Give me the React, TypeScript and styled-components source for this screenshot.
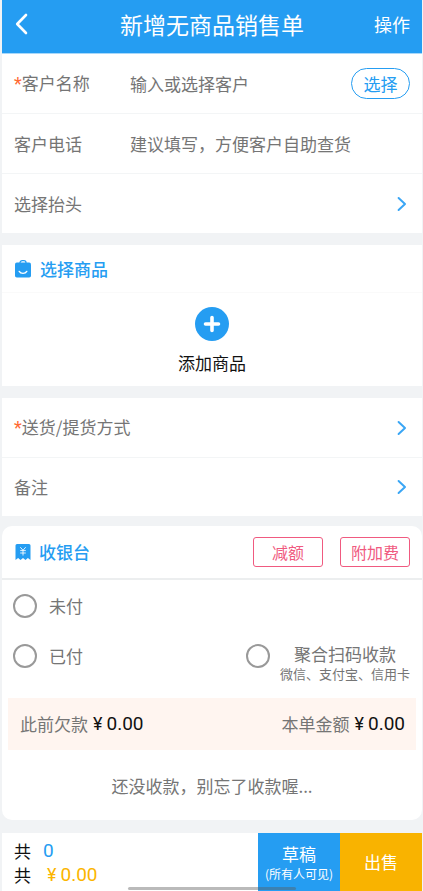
import React from "react";
import styled, { createGlobalStyle } from "styled-components";

const BLUE = "#259df2";

const GlobalStyle = createGlobalStyle`
  * { box-sizing: border-box; }
  body { margin: 0; background: #f1f3f5; }
  button, input { font: inherit; color: inherit; margin: 0; }
  button { border: 0; padding: 0; background: none; cursor: pointer; }
`;

const Page = styled.div`
  min-height: 100vh;
  display: flex;
  flex-direction: column;
  padding: 0 1px 0 2px;
  background: #f1f3f5;
  color: #757575;
  font-family: "Noto Sans CJK SC", "Noto Sans", sans-serif;
  font-size: 17px;
  line-height: 24px;
`;

const Header = styled.header`
  display: grid;
  grid-template-columns: 1fr auto 1fr;
  align-items: center;
  height: 54px;
  padding: 0 12px 5px;
  border-bottom: 1px solid #a8d8fa;
  background: ${BLUE};
  color: #fff;
`;

const Title = styled.h1`
  margin: 0;
  font-size: 23px;
  line-height: 32px;
  font-weight: 400;
`;

const HeaderButton = styled.button<{ $end?: boolean }>`
  display: flex;
  justify-self: ${(p) => (p.$end ? "end" : "start")};
  font-size: 18px;
`;

const Main = styled.main`
  flex: 1;
  display: flex;
  flex-direction: column;
  gap: 12px;
`;

const Panel = styled.section`
  background: #fff;
`;

const Row = styled.div`
  display: flex;
  align-items: center;
  height: 60px;
  padding: 0 12px;
  border-bottom: 1px solid #f3f5f6;
`;

const LinkRow = styled.button`
  display: flex;
  align-items: center;
  justify-content: space-between;
  width: 100%;
  height: 59px;
  padding: 0 15px 0 12px;
  text-align: left;
  & + & { border-top: 1px solid #f3f5f6; }
`;

const FieldLabel = styled.label`
  flex: 0 0 116px;
`;

const Required = styled.span`
  color: #ff6a33;
  font-family: Roboto, sans-serif;
  font-size: 18px;
`;

const Field = styled.input`
  flex: 1;
  min-width: 0;
  padding: 0;
  border: 0;
  outline: 0;
  background: none;
  &::placeholder { color: #757575; opacity: 1; }
`;

const PillButton = styled.button`
  width: 59px;
  height: 31px;
  border: 1px solid ${BLUE};
  border-radius: 16px;
  color: ${BLUE};
`;

const PanelHead = styled.div<{ $tall?: boolean }>`
  display: flex;
  align-items: center;
  height: ${(p) => (p.$tall ? 54 : 48)}px;
  padding: 0 12px;
  border-bottom: ${(p) => (p.$tall ? "2px solid #eceeef" : "1px solid #fafafa")};
`;

const PanelTitle = styled.h2`
  display: flex;
  align-items: center;
  gap: 7px;
  flex: 1;
  margin: 0;
  color: ${BLUE};
  font-size: 17px;
  font-weight: 500;
`;

const AddButton = styled.button`
  display: flex;
  flex-direction: column;
  align-items: center;
  gap: 10px;
  width: 100%;
  padding: 14px 0 11px;
  color: #111;
`;

const Cashier = styled(Panel)`
  margin-top: -2px;
  border-radius: 10px;
`;

const Actions = styled.div`
  display: flex;
  gap: 17px;
`;

const OutlineButton = styled.button`
  width: 70px;
  height: 30px;
  border: 1px solid #f05a80;
  border-radius: 3px;
  color: #f05a80;
  font-size: 16px;
`;

const Options = styled.div`
  display: grid;
  grid-template-columns: 1fr auto;
  grid-template-rows: 50px 50px;
  align-items: center;
  margin: 1px 0 17px;
  padding: 0 12px 0 11px;
`;

const Option = styled.label<{ $second?: boolean }>`
  display: flex;
  align-items: center;
  gap: ${(p) => (p.$second ? 10 : 12)}px;
  grid-column: ${(p) => (p.$second ? 2 : 1)};
`;

const Radio = styled.input.attrs({ type: "radio" })`
  appearance: none;
  flex: none;
  width: 24px;
  height: 24px;
  border: 2px solid #999;
  border-radius: 50%;
  &:checked { border: 7px solid ${BLUE}; }
`;

const OptionText = styled.span`
  display: flex;
  flex-direction: column;
  align-items: center;
  padding-top: 12px;
`;

const Hint = styled.small`
  font-size: 13px;
  line-height: 16px;
`;

const Totals = styled.div`
  display: flex;
  align-items: center;
  justify-content: space-between;
  height: 52px;
  margin: 0 6px;
  padding: 0 11px 0 12px;
  background: #fff5f0;
`;

const Total = styled.span`
  display: flex;
  align-items: center;
  gap: 5px;
`;

const Amount = styled.span<{ $color: string }>`
  display: inline-flex;
  align-items: center;
  gap: 4px;
  color: ${(p) => p.$color};
  font-family: Roboto, sans-serif;
  font-size: 19px;
`;

const Yen = styled.span`
  font-size: 18px;
`;

const Note = styled.p`
  margin: 0;
  padding: 24px 0 22px;
  text-align: center;
`;

const Footer = styled.footer`
  position: relative;
  display: flex;
  height: 58px;
  margin-top: 13px;
  background: #fff;
`;

const Summary = styled.div`
  flex: 1;
  padding: 6px 12px 4px;
  color: #111;
`;

const SummaryLine = styled.div<{ $wide?: boolean }>`
  display: flex;
  align-items: center;
  gap: ${(p) => (p.$wide ? 16 : 12)}px;
`;

const FooterButton = styled.button<{ $bg: string }>`
  display: flex;
  flex-direction: column;
  align-items: center;
  justify-content: center;
  width: 82px;
  background: ${(p) => p.$bg};
  color: #fff;
  line-height: 22px;
`;

const DraftHint = styled.small`
  font-size: 12px;
  line-height: 17px;
`;

const HomeBar = styled.span`
  position: absolute;
  left: 50%;
  bottom: 1px;
  width: 40%;
  height: 3px;
  transform: translateX(-50%);
  border-radius: 2px;
  background: rgba(90, 90, 90, 0.42);
  pointer-events: none;
`;

const Chevron = () => (
  <svg width="10" height="16" viewBox="0 0 10 16" fill="none" stroke="#3aa6f5" strokeWidth="2" strokeLinecap="round" strokeLinejoin="round" aria-hidden="true">
    <path d="M1.6 2 8 8 1.6 14" />
  </svg>
);

const BackIcon = () => (
  <svg width="18" height="24" viewBox="0 0 18 24" fill="none" stroke="#fff" strokeWidth="2.6" strokeLinecap="round" strokeLinejoin="round" aria-hidden="true">
    <path d="M12 3 3.2 12 12 21" />
  </svg>
);

const BagIcon = () => (
  <svg width="19" height="18" viewBox="0 0 19 18" fill="none" aria-hidden="true">
    <path d="M6 3.4V2.8C6 1.4 7 .7 8.2.7h1.6C11 .7 12 1.4 12 2.8v.6" stroke={BLUE} strokeWidth="1.3" />
    <rect x="1" y="2.6" width="16" height="15" rx="1.8" fill={BLUE} />
    <path d="M5.2 11.4c1.6 2.6 6 2.6 7.6 0" stroke="#fff" strokeWidth="1.4" strokeLinecap="round" />
  </svg>
);

const ReceiptIcon = () => (
  <svg width="18" height="18" viewBox="0 0 18 18" fill="none" aria-hidden="true">
    <path d="M1.5 2.5A1.5 1.5 0 0 1 3 1h12a1.5 1.5 0 0 1 1.5 1.5V17l-2.6-2-2.4 2L9 15l-2.5 2-2.4-2-2.6 2Z" fill={BLUE} />
    <path d="M6.3 4.2 9 7.3l2.7-3.1M9 7.3v5.2M6.2 7.6h5.6M6.2 10h5.6" stroke="#fff" strokeOpacity=".85" strokeWidth="1" />
  </svg>
);

const PlusIcon = () => (
  <svg width="34" height="34" viewBox="0 0 34 34" aria-hidden="true">
    <circle cx="17" cy="17" r="17" fill={BLUE} />
    <path d="M17 10.5v13M10.5 17h13" stroke="#fff" strokeWidth="3.6" strokeLinecap="round" />
  </svg>
);

const Money = ({ color }: { color: string }) => (
  <Amount $color={color}>
    <Yen>¥</Yen>0.00
  </Amount>
);

export default function App() {
  return (
    <Page>
      <GlobalStyle />
      <Header>
        <HeaderButton aria-label="返回"><BackIcon /></HeaderButton>
        <Title>新增无商品销售单</Title>
        <HeaderButton $end>操作</HeaderButton>
      </Header>
      <Main>
        <Panel>
          <Row>
            <FieldLabel htmlFor="customer"><Required>*</Required>客户名称</FieldLabel>
            <Field id="customer" placeholder="输入或选择客户" />
            <PillButton>选择</PillButton>
          </Row>
          <Row>
            <FieldLabel htmlFor="phone">客户电话</FieldLabel>
            <Field id="phone" type="tel" placeholder="建议填写，方便客户自助查货" />
          </Row>
          <LinkRow>选择抬头<Chevron /></LinkRow>
        </Panel>
        <Panel>
          <PanelHead>
            <PanelTitle><BagIcon />选择商品</PanelTitle>
          </PanelHead>
          <AddButton><PlusIcon />添加商品</AddButton>
        </Panel>
        <Panel>
          <LinkRow><span><Required>*</Required>送货/提货方式</span><Chevron /></LinkRow>
          <LinkRow>备注<Chevron /></LinkRow>
        </Panel>
        <Cashier>
          <PanelHead $tall>
            <PanelTitle><ReceiptIcon />收银台</PanelTitle>
            <Actions>
              <OutlineButton>减额</OutlineButton>
              <OutlineButton>附加费</OutlineButton>
            </Actions>
          </PanelHead>
          <Options>
            <Option><Radio name="pay" value="unpaid" />未付</Option>
            <Option><Radio name="pay" value="paid" />已付</Option>
            <Option $second>
              <Radio name="pay" value="scan" />
              <OptionText>聚合扫码收款<Hint>微信、支付宝、信用卡</Hint></OptionText>
            </Option>
          </Options>
          <Totals>
            <Total>此前欠款<Money color="#111" /></Total>
            <Total>本单金额<Money color="#111" /></Total>
          </Totals>
          <Note>还没收款，别忘了收款喔...</Note>
        </Cashier>
      </Main>
      <Footer>
        <Summary>
          <SummaryLine>共<Amount $color={BLUE}>0</Amount></SummaryLine>
          <SummaryLine $wide>共<Money color="#fbb500" /></SummaryLine>
        </Summary>
        <FooterButton $bg={BLUE}>草稿<DraftHint>(所有人可见)</DraftHint></FooterButton>
        <FooterButton $bg="#f9b300">出售</FooterButton>
        <HomeBar />
      </Footer>
    </Page>
  );
}
